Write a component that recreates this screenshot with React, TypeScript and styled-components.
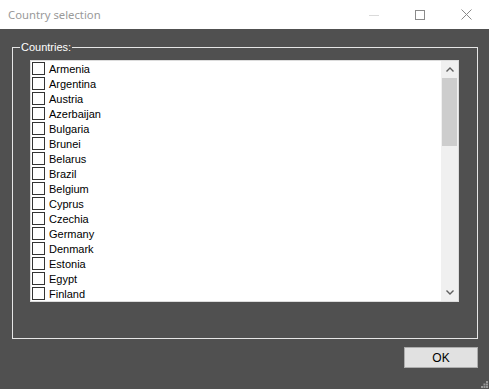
import React from "react";
import styled, { createGlobalStyle } from "styled-components";

const COUNTRIES = [
  "Armenia",
  "Argentina",
  "Austria",
  "Azerbaijan",
  "Bulgaria",
  "Brunei",
  "Belarus",
  "Brazil",
  "Belgium",
  "Cyprus",
  "Czechia",
  "Germany",
  "Denmark",
  "Estonia",
  "Egypt",
  "Finland",
];

const GlobalStyle = createGlobalStyle`
  html, body {
    margin: 0;
    padding: 0;
    background: #505050;
  }
  * {
    box-sizing: border-box;
  }
`;

export default function App() {
  return (
    <>
      <GlobalStyle />
      <Window>
        <TitleBar>
          <Title>Country selection</Title>
          <Controls>
            <CaptionButton>
              <svg width="10" height="10" viewBox="0 0 10 10">
                <line x1="0" y1="5.5" x2="10" y2="5.5" stroke="#dadada" />
              </svg>
            </CaptionButton>
            <CaptionButton>
              <svg width="10" height="10" viewBox="0 0 10 10">
                <rect x="0.5" y="0.5" width="9" height="9" fill="none" stroke="#8a8a8a" />
              </svg>
            </CaptionButton>
            <CaptionButton>
              <svg width="11" height="11" viewBox="0 0 11 11">
                <path d="M0.5 0.5 L10.5 10.5 M10.5 0.5 L0.5 10.5" stroke="#8a8a8a" />
              </svg>
            </CaptionButton>
          </Controls>
        </TitleBar>

        <Body>
          <Group>
            <Legend>Countries:</Legend>
            <ListBox>
              <Items>
                {COUNTRIES.map((name) => (
                  <Item key={name}>
                    <Check />
                    <span>{name}</span>
                  </Item>
                ))}
              </Items>
              <ScrollBar>
                <Arrow>
                  <svg width="8" height="5" viewBox="0 0 8 5">
                    <path d="M0.5 4.5 L4 1 L7.5 4.5" fill="none" stroke="#606060" strokeWidth="1.4" />
                  </svg>
                </Arrow>
                <Track>
                  <Thumb />
                </Track>
                <Arrow>
                  <svg width="8" height="5" viewBox="0 0 8 5">
                    <path d="M0.5 0.5 L4 4 L7.5 0.5" fill="none" stroke="#606060" strokeWidth="1.4" />
                  </svg>
                </Arrow>
              </ScrollBar>
            </ListBox>
          </Group>
          <Footer>
            <OkButton>OK</OkButton>
          </Footer>
        </Body>

        <Grip>
          <svg width="7" height="7" viewBox="0 0 7 7" fill="#9a9a9a">
            <rect x="5" y="0" width="2" height="2" />
            <rect x="2.5" y="2.5" width="2" height="2" />
            <rect x="5" y="2.5" width="2" height="2" />
            <rect x="0" y="5" width="2" height="2" />
            <rect x="2.5" y="5" width="2" height="2" />
            <rect x="5" y="5" width="2" height="2" />
          </svg>
        </Grip>
      </Window>
    </>
  );
}

const Window = styled.div`
  position: relative;
  width: 489px;
  height: 389px;
  display: flex;
  flex-direction: column;
  background: #505050;
  font-family: "Liberation Sans", Arial, sans-serif;
  overflow: hidden;
`;

const TitleBar = styled.div`
  height: 29px;
  background: #ffffff;
  display: flex;
  align-items: center;
  justify-content: space-between;
`;

const Title = styled.div`
  padding-left: 8px;
  font-family: "Noto Sans", "Open Sans", sans-serif;
  font-size: 11.3px;
  color: #9a9a9a;
`;

const Controls = styled.div`
  display: flex;
  height: 100%;
`;

const CaptionButton = styled.div`
  width: 46px;
  height: 100%;
  display: flex;
  align-items: center;
  justify-content: center;
`;

const Body = styled.div`
  flex: 1;
  display: flex;
  flex-direction: column;
  padding: 12px 11px 0 12px;
`;

const Group = styled.fieldset`
  margin: 0;
  height: 298px;
  padding: 6px 18px 0 17px;
  border: 1px solid #e6e6e6;
`;

const Legend = styled.legend`
  margin-left: -10px;
  padding: 0 1px;
  font-size: 11px;
  line-height: 13px;
  color: #ffffff;
`;

const ListBox = styled.div`
  height: 242px;
  background: #ffffff;
  border: 1px solid #dcdcdc;
  display: flex;
  overflow: hidden;
`;

const Items = styled.div`
  flex: 1;
  overflow: hidden;
`;

const Item = styled.div`
  height: 15px;
  display: flex;
  align-items: center;
  gap: 4px;
  padding-left: 1px;
  font-size: 11px;
  color: #000000;
`;

const Check = styled.span`
  width: 13px;
  height: 13px;
  border: 1px solid #333333;
  background: #ffffff;
  flex-shrink: 0;
`;

const ScrollBar = styled.div`
  width: 17px;
  background: #f0f0f0;
  display: flex;
  flex-direction: column;
`;

const Arrow = styled.div`
  height: 17px;
  display: flex;
  align-items: center;
  justify-content: center;
`;

const Track = styled.div`
  flex: 1;
  padding: 0 1px;
`;

const Thumb = styled.div`
  height: 68px;
  background: #cdcdcd;
`;

const Footer = styled.div`
  display: flex;
  justify-content: flex-end;
  padding-top: 8px;
`;

const OkButton = styled.button`
  width: 74px;
  height: 21px;
  margin: 0;
  padding: 0;
  background: #e1e1e1;
  border: 1px solid #adadad;
  font-family: "Liberation Sans", Arial, sans-serif;
  font-size: 12px;
  color: #000000;
`;

const Grip = styled.div`
  position: absolute;
  right: 1px;
  bottom: 1px;
  display: flex;
`;
